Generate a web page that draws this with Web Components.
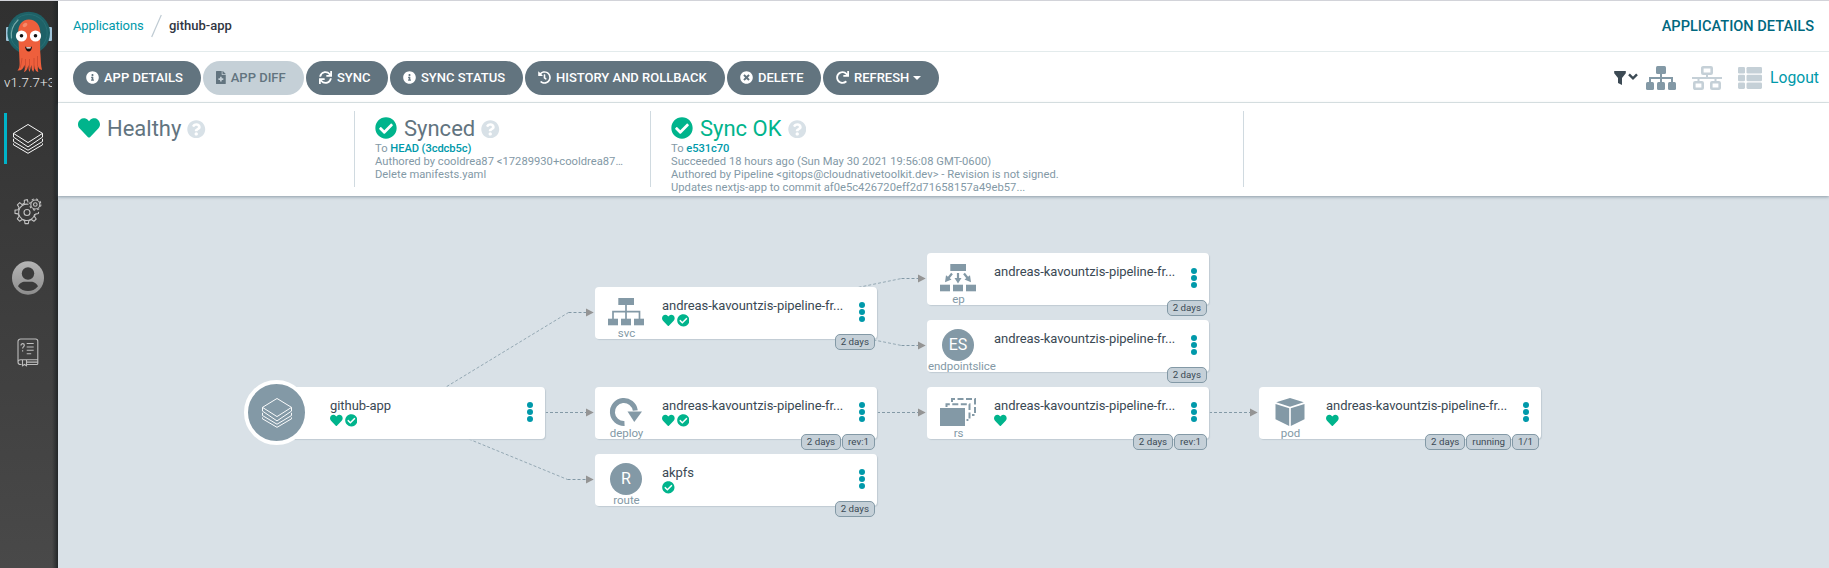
<!DOCTYPE html>
<html lang="en">
<head>
<meta charset="utf-8">
<title>github-app - Application Details</title>
<style>
  html, body { margin: 0; height: 100%; }
  body { font-family: Roboto, "Liberation Sans", sans-serif; background: #d9e1e7; overflow: hidden; }
</style>
</head>
<body>
<argo-app></argo-app>
<script>
const define = (name, html, setup) => {
  const template = document.createElement('template');
  template.innerHTML = html;
  customElements.define(name, class extends HTMLElement {
    constructor() {
      super();
      this.attachShadow({ mode: 'open' }).append(template.content.cloneNode(true));
    }
    connectedCallback() { if (setup) setup(this, this.shadowRoot); }
  });
};

/* ---------- solid glyph icons ---------- */
const GLYPHS = {
  heart: [512, 'M462.3 62.6C407.5 15.9 326 24.3 275.7 76.2L256 96.5l-19.7-20.3C186.1 24.3 104.5 15.9 49.7 62.6c-62.8 53.6-66.1 149.8-9.9 207.9l193.5 199.8c12.5 12.9 32.8 12.9 45.3 0l193.5-199.8c56.3-58.1 53-154.3-9.8-207.9z'],
  check: [512, 'M504 256c0 136.967-111.033 248-248 248S8 392.967 8 256 119.033 8 256 8s248 111.033 248 248zM227.314 387.314l184-184c6.248-6.248 6.248-16.379 0-22.627l-22.627-22.627c-6.248-6.249-16.379-6.249-22.628 0L216 308.118l-70.059-70.059c-6.248-6.248-16.379-6.248-22.628 0l-22.627 22.627c-6.248 6.248-6.248 16.379 0 22.627l104 104c6.249 6.249 16.379 6.249 22.628.001z'],
  info: [512, 'M256 8C119.043 8 8 119.083 8 256c0 136.997 111.043 248 248 248s248-111.003 248-248C504 119.083 392.957 8 256 8zm0 110c23.196 0 42 18.804 42 42s-18.804 42-42 42-42-18.804-42-42 18.804-42 42-42zm56 254c0 6.627-5.373 12-12 12h-88c-6.627 0-12-5.373-12-12v-24c0-6.627 5.373-12 12-12h12v-64h-12c-6.627 0-12-5.373-12-12v-24c0-6.627 5.373-12 12-12h64c6.627 0 12 5.373 12 12v100h12c6.627 0 12 5.373 12 12v24z'],
  question: [512, 'M504 256c0 136.997-111.043 248-248 248S8 392.997 8 256C8 119.083 119.043 8 256 8s248 111.083 248 248zM262.655 90c-54.497 0-89.255 22.957-116.549 63.758-3.536 5.286-2.353 12.415 2.715 16.258l34.699 26.31c5.205 3.947 12.621 3.008 16.665-2.122 17.864-22.658 30.113-35.797 57.303-35.797 20.429 0 45.698 13.148 45.698 32.958 0 14.976-12.363 22.667-32.534 33.976C247.128 238.528 216 254.941 216 296v4c0 6.627 5.373 12 12 12h56c6.627 0 12-5.373 12-12v-1.333c0-28.462 83.186-29.647 83.186-106.667 0-58.002-60.165-102-116.531-102zM256 338c-25.365 0-46 20.635-46 46 0 25.364 20.635 46 46 46s46-20.636 46-46c0-25.365-20.635-46-46-46z'],
  times: [512, 'M256 8C119 8 8 119 8 256s111 248 248 248 248-111 248-248S393 8 256 8zm121.6 313.1c4.7 4.7 4.7 12.3 0 17L338 377.6c-4.7 4.7-12.3 4.7-17 0L256 312l-65.1 65.6c-4.7 4.7-12.3 4.7-17 0L134.4 338c-4.7-4.7-4.7-12.3 0-17l65.6-65-65.6-65.1c-4.7-4.7-4.7-12.3 0-17l39.6-39.6c4.7-4.7 12.3-4.7 17 0l65 65.7 65.1-65.6c4.7-4.7 12.3-4.7 17 0l39.6 39.6c4.7 4.7 4.7 12.3 0 17L312 256l65.6 65.1z'],
  sync: [512, 'M440.65 12.57l4 82.77A247.16 247.16 0 0 0 255.83 8C134.73 8 33.91 94.92 12.29 209.82A12 12 0 0 0 24.09 224h49.05a12 12 0 0 0 11.67-9.26 175.91 175.91 0 0 1 317-56.94l-101.46-4.86a12 12 0 0 0-12.57 12v47.41a12 12 0 0 0 12 12H500a12 12 0 0 0 12-12V12a12 12 0 0 0-12-12h-47.37a12 12 0 0 0-11.98 12.57zM255.83 432a175.61 175.61 0 0 1-146-77.8l101.8 4.87a12 12 0 0 0 12.57-12v-47.4a12 12 0 0 0-12-12H12a12 12 0 0 0-12 12V500a12 12 0 0 0 12 12h47.35a12 12 0 0 0 12-12.6l-4.15-82.57A247.17 247.17 0 0 0 255.83 504c121.11 0 221.93-86.92 243.55-201.82a12 12 0 0 0-11.8-14.18h-49.05a12 12 0 0 0-11.67 9.26A175.86 175.86 0 0 1 255.83 432z'],
  redo: [512, 'M500.33 0h-47.41a12 12 0 0 0-12 12.57l4 82.76A247.42 247.42 0 0 0 256 8C119.34 8 7.9 119.53 8 256.19 8.1 393.07 119.1 504 256 504a247.1 247.1 0 0 0 166.18-63.91 12 12 0 0 0 .48-17.43l-34-34a12 12 0 0 0-16.38-.55A176 176 0 1 1 402.1 157.8l-101.53-4.87a12 12 0 0 0-12.57 12v47.41a12 12 0 0 0 12 12h200.33a12 12 0 0 0 12-12V12a12 12 0 0 0-12-12z'],
  history: [512, 'M504 255.531c.253 136.64-111.18 248.372-247.82 248.468-59.015.042-113.223-20.53-155.822-54.911-11.077-8.94-11.905-25.541-1.839-35.607l11.267-11.267c8.609-8.609 22.353-9.551 31.891-1.984C173.062 425.135 212.781 440 256 440c101.705 0 184-82.311 184-184 0-101.705-82.311-184-184-184-48.814 0-93.149 18.969-126.068 49.932l50.754 50.754c10.08 10.08 2.941 27.314-11.313 27.314H24c-8.837 0-16-7.163-16-16V38.627c0-14.254 17.234-21.393 27.314-11.314l49.372 49.372C129.209 34.136 189.552 8 256 8c136.81 0 247.747 110.78 248 247.531zm-180.912 78.784l9.823-12.63c8.138-10.463 6.253-25.542-4.21-33.679L288 256.349V152c0-13.255-10.745-24-24-24h-16c-13.255 0-24 10.745-24 24v135.651l65.409 50.874c10.463 8.137 25.541 6.253 33.679-4.21z'],
  file: [384, 'M377 105L279.1 7c-4.5-4.5-10.6-7-17-7H256v128h128v-6.1c0-6.3-2.5-12.4-7-16.9zm-153 31V0H24C10.7 0 0 10.7 0 24v464c0 13.3 10.7 24 24 24h336c13.3 0 24-10.7 24-24V160H248c-13.2 0-24-10.8-24-24zm64 160v48c0 4.4-3.6 8-8 8h-56v56c0 4.4-3.6 8-8 8h-48c-4.4 0-8-3.6-8-8v-56h-56c-4.4 0-8-3.6-8-8v-48c0-4.4 3.6-8 8-8h56v-56c0-4.4 3.6-8 8-8h48c4.4 0 8 3.6 8 8v56h56c4.4 0 8 3.6 8 8z']
};
define('fa-icon', `<style>:host{display:block;flex:none}svg{display:block;fill:currentColor}</style><svg></svg>`, (el, root) => {
  const [w, d] = GLYPHS[el.getAttribute('name')];
  const size = +el.getAttribute('size');
  const svg = root.querySelector('svg');
  svg.setAttribute('viewBox', `0 0 ${w} 512`);
  svg.setAttribute('width', size * w / 512);
  svg.setAttribute('height', size);
  svg.innerHTML = `<path fill-rule="evenodd" d="${d}"/>`;
});

const LAYERS = `<svg width="30" height="30" viewBox="0.500 0.500 31 31" fill="none" stroke="currentColor" stroke-width="1" stroke-linejoin="round">
  <path d="M16 1L31 10.2 16 19.7 1 10.2z"/>
  <path d="M1 10.2V14L16 24.2 31 14V10.2M1 15.8V18.6L16 27.6 31 18.6V15.8M1 20.6V22L16 30.8 31 22V20.6"/></svg>`;

/* ---------- sidebar ---------- */
define('argo-sidebar', `<style>
  :host{display:flex;flex-direction:column;box-sizing:border-box;height:100%;color:#c8c8c8;
    background:linear-gradient(90deg,transparent 52px,#222628 58px),linear-gradient(#303030,#494949)}
  .logo{height:62px;padding:9px 0 0 5px}
  .version{width:48px;margin-left:4px;margin-top:2px;height:18px;overflow:hidden;white-space:nowrap;font-weight:300;font-size:13.3px;line-height:18px;color:#eee;letter-spacing:.2px}
  .item{box-sizing:border-box;display:flex;align-items:center;justify-content:center;width:48px;margin-left:4px;height:51px;padding-right:0}
  .first{margin-top:21px;border-left:3px solid #00b3c8;padding-right:3px;color:#fff}
  .gear{margin-top:22px}.user{margin-top:15px}.docs{margin-top:24px}
  svg{display:block}
</style>
<div class="logo"><svg width="47" height="62" viewBox="5 10 47 62">
  <rect x="6" y="27" width="4" height="14" rx="1" fill="#9fc3d8"/><rect x="48" y="27" width="4" height="14" rx="1" fill="#9fc3d8"/>
  <circle cx="28.7" cy="33" r="21.300" fill="#1e6167"/><circle cx="28.7" cy="33" r="18.5" fill="none" stroke="#286f74" stroke-width="1"/>
  <path d="M18 20Q10 28 11.5 38" fill="none" stroke="#75a9a8" stroke-width="1.2" stroke-linecap="round"/>
  <path d="M18.200 33C18 25 22 19.500 28.900 19.500S40.500 25 40.300 33c-.2 9-.3 15 .2 22 .4 6 .4 11 1.600 15-2-.3-4-1.500-4.200-5 0 3-.5 5 .5 7-3-.4-3.600-3-4-7 0 3-.5 5-1 7-2-2-1.800-4-2-7-.8 3-1 4.500-2 7-1-2-.8-4-1-7-.7 3-1.500 6.500-4.500 7 1.500-2.500.8-5 .5-7-1 4-3.500 6-7 5.500 2-1.500 2.200-4.500 2.200-7.500C19.200 52 18.600 44 18.200 33z" fill="#ee5f3c"/>
  <path d="M22 58Q21.500 64 20 68M25.500 59v9M29.500 59v10M34 58v11M37.500 56v10" stroke="#c9492f" stroke-width=".8" fill="none"/>
  <ellipse cx="25" cy="25" rx="2.6" ry="1.8" fill="#f58a6a" transform="rotate(-35 25 25)"/>
  <circle cx="21.500" cy="36" r="5.600" fill="#fff"/><circle cx="35.500" cy="36" r="5.600" fill="#fff"/>
  <circle cx="21.500" cy="35.800" r="1.800" fill="#111"/><circle cx="35.500" cy="35.800" r="1.800" fill="#111"/>
  <path d="M25 46.500Q28.500 48.500 32 46.500 31.500 51.500 28.700 51.500T25 46.500z" fill="#1a1010"/><path d="M26.200 47.200h4.800l-.6 1.300h-3.600z" fill="#fff"/>
</svg></div>
<div class="version">v1.7.7+3</div>
<div class="item first">${LAYERS}</div>
<div class="item gear"><svg width="30" height="30" viewBox="0 0 30 30" fill="none" stroke="#c2c2c2" stroke-width="1.100">
  <path d="M15 5.500l-.6-2.900-3.100.6.1 3.100-2.300 1.300-2.400-2-2.300 2.300 1.700 2.600-1 2.300-3.100.3v3.300l3.100.5 1 2.400-1.800 2.600 2.300 2.300 2.600-1.700 2.300.9.5 3.200h3.300l.6-3.100 2.400-1 2.600 1.800 2.300-2.300-1.800-2.600 1-2.300 3-.6.2-1.600" stroke-linejoin="round"/>
  <path d="M15.500 7.300a8.200 8.200 0 1 0 6.300 9.700"/><circle cx="14" cy="15.500" r="3"/>
  <circle cx="22.300" cy="7.500" r="4.500"/><circle cx="22.300" cy="7.500" r="1.800"/><circle cx="22.300" cy="7.500" r="5.600" stroke-dasharray="2.200 2.200"/></svg></div>
<div class="item user"><svg width="32" height="34" viewBox="0 0 32 34"><defs><linearGradient id="g" x2="0" y2="1"><stop stop-color="#b5b5b5"/><stop offset="1" stop-color="#8d8d8d"/></linearGradient></defs>
  <ellipse cx="16" cy="17" rx="16" ry="16.700" fill="url(#g)"/><circle cx="16" cy="12.500" r="6.200" fill="#3b3b3b"/><path d="M6 25.200C9 20.300 12 20.800 16 20.800S23 20.300 26 25.200C23 28.500 20 30 16 30S9 28.500 6 25.200z" fill="#3b3b3b"/></svg></div>
<div class="item docs"><svg width="22" height="29" viewBox="0 0 22 29" fill="none" stroke="#bdbdbd" stroke-width="1.100">
  <path d="M4.500 26.500H3.600A2.600 2.600 0 0 1 1 23.900V3.600A2.600 2.600 0 0 1 3.600 1h15A2.200 2.200 0 0 1 20.800 3.200V25.500a1 1 0 0 1-1 1H10M20.800 21.700H3.600A2.500 2.500 0 0 0 1 24.200M20.800 24.100H10"/>
  <path d="M5.500 22v5.800l2-1.300 2 1.300V22"/><path d="M4 7.500C4 5 7.300 5.200 7.300 7.300 7.300 9 5.600 8.700 5.600 10.500M5.600 12.200v1.300" stroke-width="1.200"/><path d="M9.700 5.500h7M9.700 9h7M9.700 12.300h7M9.700 15.700h4.500"/></svg></div>`);

/* ---------- header row ---------- */
define('page-header', `<style>
  :host{display:flex;align-items:center;box-sizing:border-box;height:51px;padding:0 15px 1px;border-bottom:1px solid #e3ebec;font-size:13px;background:#fff}
  nav{display:flex;align-items:center;flex:1;color:#303642;font-weight:500}
  a{color:#0099aa;font-weight:400;letter-spacing:-.12px;width:78px}
  svg{display:block;margin-right:7px}
  h1{margin:0;font-size:14.600px;font-weight:500;color:#00687f;}
</style><nav><a>Applications</a><svg width="11" height="24"><path d="M.7 23L10.300 1" stroke="#bfcbd3" stroke-width="1.200"/></svg><span>github-app</span></nav><h1>APPLICATION DETAILS</h1>`);

/* ---------- toolbar ---------- */
define('pill-button', `<style>
  :host{display:flex;align-items:center;box-sizing:border-box;height:34px;border-radius:17px;background:#62747f;color:#fff;padding-left:13px;font-size:13px;font-weight:500;white-space:nowrap;width:var(--w)}
  :host([disabled]){background:#c5d0d7;color:#62747f}
  fa-icon{margin-right:5px}
  .caret{display:none;margin-left:4px;border:4px solid transparent;border-top-color:currentColor;border-bottom:0}
  :host([menu]) .caret{display:block}
</style><slot></slot><span class="caret"></span>`, (el, root) => {
  el.style.setProperty('--w', el.getAttribute('width') + 'px');
  const icon = document.createElement('fa-icon');
  icon.setAttribute('name', el.getAttribute('icon'));
  icon.setAttribute('size', '13');
  root.querySelector('slot').before(icon);
});
define('app-toolbar', `<style>
  :host{display:flex;align-items:center;box-sizing:border-box;height:51px;padding:1px 10px 0 15px;border-bottom:1px solid #e3ebec;background:#fff}
  .actions{display:flex;gap:2px;flex:1}
  .views{display:flex;align-items:center;color:#c5d0d7}
  svg{display:block;fill:currentColor}
  a{color:#0099aa;font-size:15.700px;margin-top:-1px}
</style>
<div class="actions">
  <pill-button icon="info" width="128">APP DETAILS</pill-button>
  <pill-button icon="file" width="101" disabled>APP DIFF</pill-button>
  <pill-button icon="sync" width="82">SYNC</pill-button>
  <pill-button icon="info" width="133">SYNC STATUS</pill-button>
  <pill-button icon="history" width="200">HISTORY AND ROLLBACK</pill-button>
  <pill-button icon="times" width="94">DELETE</pill-button>
  <pill-button icon="redo" width="116" menu>REFRESH</pill-button>
</div>
<div class="views">
  <svg width="24" height="14" style="color:#3c4a54;margin-right:8px"><path d="M.2 0H11.800V2.200L8 7v7L4 12V7L.2 2.200z"/><path d="M15 3.300l4 4 4-4" fill="none" stroke="currentColor" stroke-width="2.400"/></svg>
  <svg width="30" height="24" style="color:#8399a6;margin-right:16px"><rect x="10" width="10" height="8" rx="1.500"/><rect y="16" width="8" height="8" rx="1.500"/><rect x="11" y="16" width="8" height="8" rx="1.500"/><rect x="22" y="16" width="8" height="8" rx="1.500"/><path d="M15 7v9M4 16v-4h22v4" fill="none" stroke="currentColor" stroke-width="2"/></svg>
  <svg width="30" height="24" style="margin-right:16px"><g fill="none" stroke="currentColor" stroke-width="2.600"><rect x="10.300" y="1.300" width="9.400" height="6.400" rx=".8"/><rect x="2.300" y="16.300" width="8.400" height="6.400" rx=".8"/><rect x="19.300" y="16.300" width="8.400" height="6.400" rx=".8"/></g><path d="M0 12h30M15 8v4M6.500 12v4M23.500 12v4" fill="none" stroke="currentColor" stroke-width="2"/></svg>
  <svg width="24" height="22" style="margin-right:8px"><rect width="7" height="6.500" rx="1.300"/><rect y="7.700" width="7" height="6.500" rx="1.300"/><rect y="15.400" width="7" height="6.500" rx="1.300"/><rect x="8.500" width="15.500" height="6.500" rx="1.300"/><rect x="8.500" y="7.700" width="15.500" height="6.500" rx="1.300"/><rect x="8.500" y="15.400" width="15.500" height="6.500" rx="1.300"/></svg>
  <a>Logout</a>
</div>`);

/* ---------- status panel ---------- */
define('status-item', `<style>
  :host{display:block;box-sizing:border-box;height:76px;padding-left:20px;border-right:1px solid #d0dae0;color:#8399a6;font-size:11.200px;line-height:13px;letter-spacing:.02px;white-space:nowrap}
  .head{display:flex;align-items:center;box-sizing:border-box;height:31px;padding-top:5px;font-size:22px;line-height:26px;letter-spacing:0;color:var(--title,#62747f)}
  .head span{margin:0 6px 0 7px}
  .mark{color:#00b48c;margin-top:-3px}
  .help{color:#d8e1e7}
</style><div class="head"><span></span><fa-icon class="help" name="question" size="18.500"></fa-icon></div><slot></slot>`, (el, root) => {
  const label = root.querySelector('.head span');
  label.textContent = el.getAttribute('label');
  const mark = document.createElement('fa-icon');
  mark.className = 'mark';
  mark.setAttribute('name', el.getAttribute('icon'));
  mark.setAttribute('size', '22');
  label.before(mark);
});
define('status-panel', `<style>
  :host{display:flex;position:relative;box-sizing:border-box;height:94px;padding:8px 0 0;background:#fff;box-shadow:0 1px 3px rgba(80,100,115,.55)}
  b{font-weight:500;color:#0099aa;letter-spacing:-.1px}
  .h{width:297px}.s{width:296px}.o{width:593px;--title:#00b48c}
</style>
<status-item class="h" icon="heart" label="Healthy"></status-item>
<status-item class="s" icon="check" label="Synced"><div>To <b>HEAD (3cdcb5c)</b></div><div>Authored by cooldrea87 &lt;17289930+cooldrea87…</div><div>Delete manifests.yaml</div></status-item>
<status-item class="o" icon="check" label="Sync OK"><div>To <b>e531c70</b></div><div>Succeeded 18 hours ago (Sun May 30 2021 19:56:08 GMT-0600)</div><div>Authored by Pipeline &lt;gitops@cloudnativetoolkit.dev&gt; - Revision is not signed.</div><div>Updates nextjs-app to commit af0e5c426720eff2d71658157a49eb57...</div></status-item>`);

/* ---------- resource nodes ---------- */
const KINDS = {
  svc: '<rect x="10.300" y="0" width="15.700" height="7"/><rect y="20.700" width="10" height="6.600"/><rect x="13" y="20.700" width="10" height="6.600"/><rect x="26" y="20.700" width="10" height="6.600"/><path d="M18 7v14M5 21v-7.300h26.500V21" fill="none" stroke="currentColor" stroke-width="1.700"/>',
  ep: '<rect x="10.300" y="0" width="15.700" height="7"/><rect y="20.700" width="10" height="6.600"/><rect x="13" y="20.700" width="10" height="6.600"/><rect x="26" y="20.700" width="10" height="6.600"/><path d="M12 9.500L8 14.500M18 9v6M24 9.500l4 5" stroke="currentColor" stroke-width="2.200" fill="none"/><path d="M5 18.200l1-7 5.500 4.300zM14.500 14h7L18 19.500zM31 18.200l-1-7-5.500 4.300z"/>',
  deploy: '<path d="M16.500 25.500A11.500 11.500 0 1 1 27.300 12.500" fill="none" stroke="currentColor" stroke-width="5"/><path d="M19.500 13.500H34L26.300 24z"/>',
  rs: '<rect y="10" width="25" height="18"/><path d="M6.500 9V6.300H29.500V22H26.500" fill="none" stroke="currentColor" stroke-width="2" stroke-dasharray="6 2.500"/><path d="M12 4V1H35V17H32" fill="none" stroke="currentColor" stroke-width="2" stroke-dasharray="6 2.500"/>',
  pod: '<path d="M18 0L31.800 4.300 18 8.700 4.200 4.300zM3.500 6L17.200 10.300V28L3.500 21.300zM32.500 6L18.800 10.300V28L32.500 21.300z"/>'
};
define('resource-node', `<style>
  :host{position:absolute;display:grid;grid-template-columns:67px 1fr 30px;box-sizing:border-box;width:282px;height:52px;border-radius:4px;background:#fff;box-shadow:1px 1px 1px #c0cbd3;color:#3a4954}
  .kind{display:flex;flex-direction:column;align-items:center;box-sizing:border-box;width:62px;padding-left:1px;color:#8399a6;font-size:11.500px;line-height:13px;white-space:nowrap}
  .kind>span{align-self:safe center;margin-top:1px;letter-spacing:-.05px}
  .pic{display:flex;align-items:center;justify-content:center;height:39px;margin-left:-1px}
  .pic svg{margin-top:10px;fill:currentColor;overflow:visible}
  .letter{box-sizing:border-box;display:flex;align-items:center;justify-content:center;width:32px;height:32px;border-radius:50%;background:#8399a6;color:#fff;font-size:16px;margin-top:10px}
  .name{font-size:13px;line-height:17px;padding-top:10px;white-space:nowrap;letter-spacing:-.05px}
  .marks{display:flex;gap:2px;color:#00b48c}
  .dots{display:flex;flex-direction:column;align-items:center;gap:1px;padding-top:15px}
  .dots i{width:6px;height:6px;border-radius:50%;background:#0099aa}
  .tags{position:absolute;right:2px;top:47px;display:flex;gap:1px}
  .tags span{box-sizing:border-box;height:16px;border:1px solid #8399a6;border-radius:5px;background:#c5d0d8;padding:0 5px;font-size:9.750px;line-height:14px;white-space:nowrap}
  :host([root]) .kind{position:absolute;left:-19px;top:-7px;width:65px;height:65px;padding:0;border-radius:50%;border:4px solid #fff;background:#8399a6;color:#fff;justify-content:center}
  :host([root]) .text{grid-column:2}
</style>
<div class="kind"></div><div class="text"><div class="name"></div><div class="marks"></div></div><div class="dots"><i></i><i></i><i></i></div><div class="tags"></div>`, (el, root) => {
  const get = a => el.getAttribute(a);
  const kind = get('kind');
  el.style.left = get('x') + 'px';
  el.style.top = get('y') + 'px';
  root.querySelector('.name').textContent = get('name');
  root.querySelector('.marks').innerHTML = (get('marks') || '').split(' ').filter(Boolean).map(m => `<fa-icon name="${m}" size="12.700"></fa-icon>`).join('');
  root.querySelector('.tags').innerHTML = (get('tags') || '').split(',').filter(Boolean).map(t => `<span>${t}</span>`).join('');
  root.querySelector('.kind').innerHTML = el.hasAttribute('root') ? LAYERS
    : get('letter') ? `<div class="pic"><div class="letter">${get('letter')}</div></div><span>${kind}</span>`
    : `<div class="pic"><svg width="36" height="28">${KINDS[kind]}</svg></div><span>${kind}</span>`;
});

/* Node canvas: its origin sits at (58, 196) of the window. */
define('resource-tree', `<style>
  :host{display:block;position:relative;min-height:0;overflow:hidden}
  svg{position:absolute;left:0;top:0}
</style>
<svg width="1771" height="372" viewBox="58 196 1771 372"><g fill="none" stroke="#8399a6" stroke-dasharray="3 2">
  <path stroke-width=".8" d="M404 412.500L568.500 312.500"/><path d="M568.500 312.500H588"/>
  <path d="M545 412.500H588"/>
  <path stroke-width=".8" d="M404 412.500L567.500 479.500"/><path d="M567.500 479.500H588"/>
  <path stroke-width=".8" d="M736 312.500L901.500 278.500M736 312.500L901.500 345.500"/><path d="M901.500 278.500H920M901.500 345.500H920M877 412.500H920M1209 412.500H1252"/></g>
  <g fill="#949494"><path d="M586 308.500l7.700 4-7.700 4zM586 408.500l7.700 4-7.700 4zM586 475.500l7.700 4-7.700 4zM918 274.500l7.700 4-7.700 4zM918 341.500l7.700 4-7.700 4zM918 408.500l7.700 4-7.700 4zM1250 408.500l7.700 4-7.700 4z"/></g>
</svg>
<resource-node root x="205" y="191" name="github-app" marks="heart check"></resource-node>
<resource-node x="537" y="91" kind="svc" name="andreas-kavountzis-pipeline-fr..." marks="heart check" tags="2 days"></resource-node>
<resource-node x="537" y="191" kind="deploy" name="andreas-kavountzis-pipeline-fr..." marks="heart check" tags="2 days,rev:1"></resource-node>
<resource-node x="537" y="258" kind="route" letter="R" name="akpfs" marks="check" tags="2 days"></resource-node>
<resource-node x="869" y="57" kind="ep" name="andreas-kavountzis-pipeline-fr..." tags="2 days"></resource-node>
<resource-node x="869" y="124" kind="endpointslice" letter="ES" name="andreas-kavountzis-pipeline-fr..." tags="2 days"></resource-node>
<resource-node x="869" y="191" kind="rs" name="andreas-kavountzis-pipeline-fr..." marks="heart" tags="2 days,rev:1"></resource-node>
<resource-node x="1201" y="191" kind="pod" name="andreas-kavountzis-pipeline-fr..." marks="heart" tags="2 days,running,1/1"></resource-node>`);

define('argo-app', `<style>
  :host{display:grid;grid-template-columns:58px 1fr;box-sizing:border-box;height:568px;border-top:1px solid #d2d3d9}
  main{display:grid;grid-template-rows:51px 51px 93px 1fr;min-width:0;min-height:0}
  status-panel{z-index:1;height:93px}
</style><argo-sidebar></argo-sidebar><main><page-header></page-header><app-toolbar></app-toolbar><status-panel></status-panel><resource-tree></resource-tree></main>`);
</script>
</body>
</html>
